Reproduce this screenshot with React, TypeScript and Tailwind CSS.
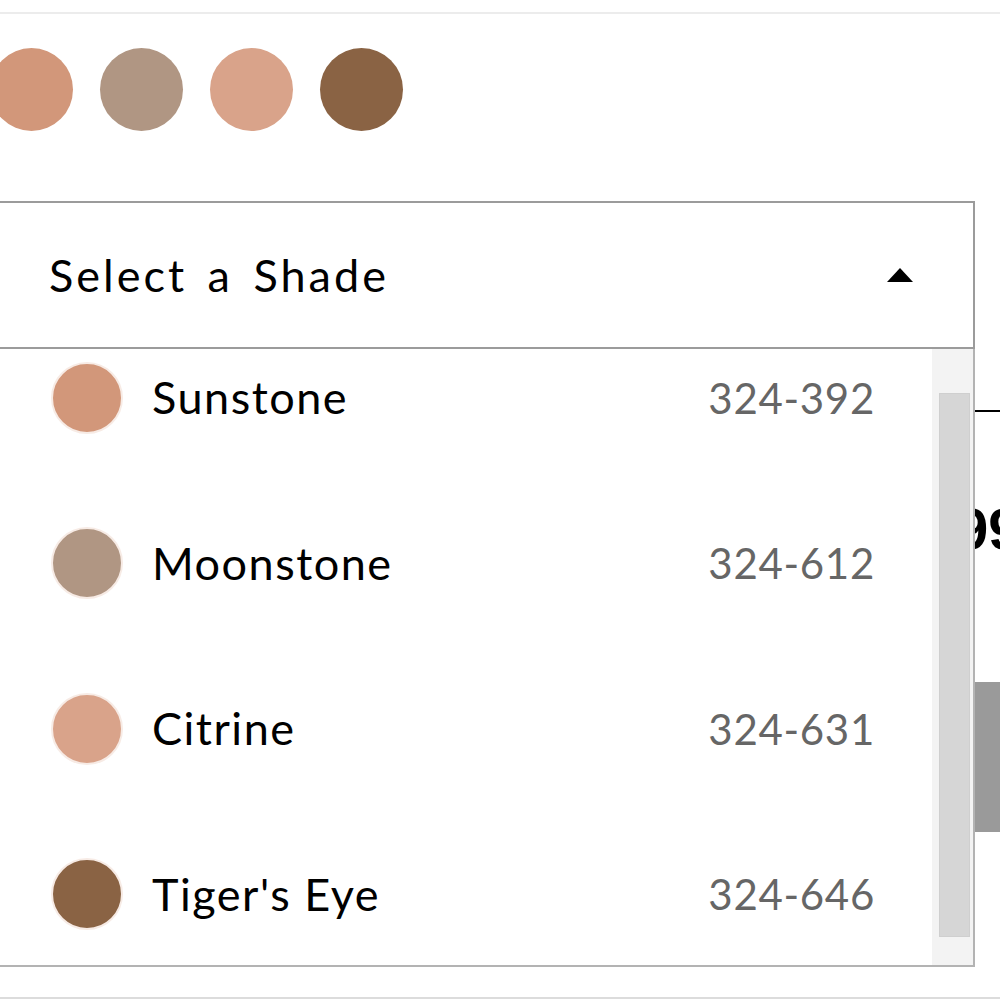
import React from 'react';

const swatches = ['#d2977a', '#b09683', '#d9a38a', '#8a6344'];

const shades = [
  { name: 'Sunstone', code: '324-392', color: '#d2977a' },
  { name: 'Moonstone', code: '324-612', color: '#b09683' },
  { name: 'Citrine', code: '324-631', color: '#d9a38a' },
  { name: "Tiger's Eye", code: '324-646', color: '#8a6344' },
];

export default function App() {
  return (
    <div className="relative w-[1000px] h-[999px] overflow-hidden bg-white font-['Lato','Open_Sans',sans-serif] text-black">
      {/* top rule */}
      <div className="h-[12px]" />
      <div className="h-[2px] bg-[#ececec]" />

      {/* swatch row */}
      <div className="flex gap-[27px] -ml-[10px] pt-[34px]">
        {swatches.map((c) => (
          <div key={c} className="w-[83px] h-[83px] rounded-full shrink-0" style={{ backgroundColor: c }} />
        ))}
      </div>

      {/* select */}
      <div className="mt-[70px] -ml-[2px] w-[977px] h-[148px] border-2 border-[#9b9b9b] flex items-center justify-between pl-[49px] pr-[60px]">
        <span className="text-[45px] leading-none tracking-[3px] [word-spacing:6px]">Select a Shade</span>
        <span className="w-0 h-0 border-x-[13px] border-x-transparent border-b-[14px] border-b-black" />
      </div>

      {/* page content under the open menu */}
      <div className="mt-[61px] h-[2px] bg-black" />
      <div className="mt-[88px] pl-[843px] text-[58px] leading-none font-bold font-['Liberation_Sans',sans-serif] whitespace-nowrap">
        $24.99
      </div>
      <div className="mt-[124px] h-[150px] bg-[#9a9a9a]" />
      <div className="mt-[165px] h-[2px] bg-[#dcdcdc]" />

      {/* open menu */}
      <div className="absolute top-[349px] -left-[2px] w-[977px] h-[618px] border-x-2 border-b-2 border-[#b3b3b3] bg-white flex overflow-hidden">
        <div className="flex-1 -mt-[34px]">
          {shades.map((s) => (
            <div key={s.name} className="h-[165.5px] flex items-center pl-[51px] pr-[57px]">
              <div
                className="w-[72px] h-[72px] rounded-full border-2 border-[#f7ebe5] shrink-0"
                style={{ backgroundColor: s.color }}
              />
              <span className="ml-[29px] text-[45px] leading-none tracking-[1.5px]">{s.name}</span>
              <span className="ml-auto text-[42px] leading-none text-[#666] tracking-[0.7px]">{s.code}</span>
            </div>
          ))}
        </div>
        <div className="w-[41px] h-full bg-[#f3f3f3] pt-[44px] pb-[28px] pl-[7px] pr-[3px]">
          <div className="h-full bg-[#d6d6d6] border border-[#cfcfcf]" />
        </div>
      </div>
    </div>
  );
}
